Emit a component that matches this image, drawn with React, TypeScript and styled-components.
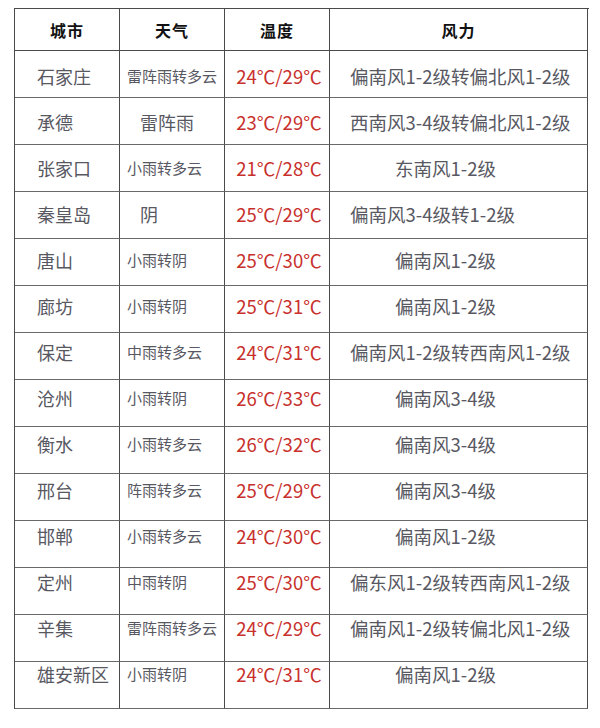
import React from 'react';
import styled, { createGlobalStyle } from 'styled-components';

const GlobalStyle = createGlobalStyle`
  html, body {
    margin: 0;
    padding: 0;
    background: #ffffff;
  }
  body {
    font-family: "Noto Sans CJK SC", "Noto Sans", sans-serif;
  }
`;

const Page = styled.div`
  width: 600px;
  height: 728px;
  padding: 8px 0 0 14px;
  box-sizing: border-box;
  background: #fff;
`;

const Table = styled.div`
  display: grid;
  grid-template-columns: 105px 105px 105px 258px;
  width: 574px;
  border-top: 1px solid #4a4a4a;
  border-left: 1px solid #4a4a4a;
`;

const HeadCell = styled.div`
  height: 42px;
  box-sizing: border-box;
  border-right: 1px solid #4a4a4a;
  border-bottom: 1px solid #4a4a4a;
  display: flex;
  align-items: center;
  justify-content: center;
  font-size: 16px;
  font-weight: 700;
  color: #111;
  letter-spacing: 1px;
`;

const Cell = styled.div<{ $shift: number }>`
  height: 47px;
  box-sizing: border-box;
  border-right: 1px solid #4a4a4a;
  border-bottom: 1px solid #6a6a6a;
  padding-top: ${(p) => p.$shift}px;
  line-height: 24px;
  white-space: nowrap;
  overflow: hidden;
  color: #585862;
`;

const CityCell = styled(Cell)`
  font-size: 18px;
  padding-left: 22px;
`;

const WeatherCell = styled(Cell)<{ $big?: boolean }>`
  font-size: ${(p) => (p.$big ? '18px' : '15px')};
  padding-left: ${(p) => (p.$big ? '20px' : '7px')};
`;

const TempCell = styled(Cell)`
  font-size: 18.5px;
  text-align: center;
  padding-left: 4px;
  color: #c8302c;
`;

const WindCell = styled(Cell)<{ $short?: boolean }>`
  font-size: 18.5px;
  padding-left: ${(p) => (p.$short ? '65px' : '20px')};
`;

type Row = {
  city: string;
  weather: string;
  big?: boolean;
  temp: string;
  wind: string;
  short?: boolean;
};

const rows: Row[] = [
  { city: '石家庄', weather: '雷阵雨转多云', temp: '24℃/29℃', wind: '偏南风1-2级转偏北风1-2级' },
  { city: '承德', weather: '雷阵雨', big: true, temp: '23℃/29℃', wind: '西南风3-4级转偏北风1-2级' },
  { city: '张家口', weather: '小雨转多云', temp: '21℃/28℃', wind: '东南风1-2级', short: true },
  { city: '秦皇岛', weather: '阴', big: true, temp: '25℃/29℃', wind: '偏南风3-4级转1-2级' },
  { city: '唐山', weather: '小雨转阴', temp: '25℃/30℃', wind: '偏南风1-2级', short: true },
  { city: '廊坊', weather: '小雨转阴', temp: '25℃/31℃', wind: '偏南风1-2级', short: true },
  { city: '保定', weather: '中雨转多云', temp: '24℃/31℃', wind: '偏南风1-2级转西南风1-2级' },
  { city: '沧州', weather: '小雨转阴', temp: '26℃/33℃', wind: '偏南风3-4级', short: true },
  { city: '衡水', weather: '小雨转多云', temp: '26℃/32℃', wind: '偏南风3-4级', short: true },
  { city: '邢台', weather: '阵雨转多云', temp: '25℃/29℃', wind: '偏南风3-4级', short: true },
  { city: '邯郸', weather: '小雨转多云', temp: '24℃/30℃', wind: '偏南风1-2级', short: true },
  { city: '定州', weather: '中雨转阴', temp: '25℃/30℃', wind: '偏东风1-2级转西南风1-2级' },
  { city: '辛集', weather: '雷阵雨转多云', temp: '24℃/29℃', wind: '偏南风1-2级转偏北风1-2级' },
  { city: '雄安新区', weather: '小雨转阴', temp: '24℃/31℃', wind: '偏南风1-2级', short: true },
];

export default function App() {
  return (
    <Page>
      <GlobalStyle />
      <Table>
        <HeadCell>城市</HeadCell>
        <HeadCell>天气</HeadCell>
        <HeadCell>温度</HeadCell>
        <HeadCell>风力</HeadCell>
        {rows.map((r, i) => {
          // text drifts upward a pixel per row in the source image
          const shift = Math.max(0, 13 - i);
          return (
            <React.Fragment key={r.city}>
              <CityCell $shift={shift}>{r.city}</CityCell>
              <WeatherCell $shift={shift} $big={r.big}>
                {r.weather}
              </WeatherCell>
              <TempCell $shift={shift}>{r.temp}</TempCell>
              <WindCell $shift={shift} $short={r.short}>
                {r.wind}
              </WindCell>
            </React.Fragment>
          );
        })}
      </Table>
    </Page>
  );
}
